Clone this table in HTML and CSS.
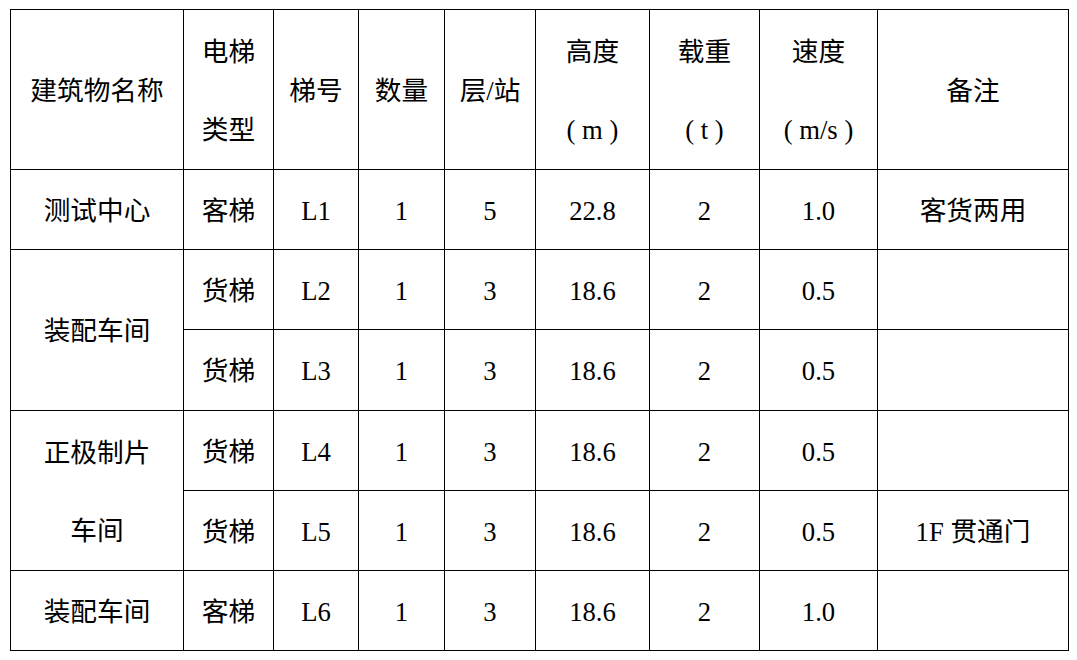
FILE: index.html
```html
<!DOCTYPE html>
<html lang="zh">
<head>
<meta charset="utf-8">
<link rel="stylesheet" href="styles.css">
</head>
<body>
<table class="spec">
  <colgroup>
    <col class="c1"><col class="c2"><col class="c3"><col class="c4"><col class="c5"><col class="c6"><col class="c7"><col class="c8"><col class="c9">
  </colgroup>
  <tr class="head">
    <td>建筑物名称</td>
    <td class="two">电梯<br>类型</td>
    <td>梯号</td>
    <td>数量</td>
    <td>层/站</td>
    <td class="two">高度<br>( m )</td>
    <td class="two">载重<br>( t )</td>
    <td class="two">速度<br>( m/s )</td>
    <td>备注</td>
  </tr>
  <tr>
    <td>测试中心</td><td>客梯</td><td>L1</td><td>1</td><td>5</td><td>22.8</td><td>2</td><td>1.0</td><td>客货两用</td>
  </tr>
  <tr>
    <td rowspan="2">装配车间</td><td>货梯</td><td>L2</td><td>1</td><td>3</td><td>18.6</td><td>2</td><td>0.5</td><td></td>
  </tr>
  <tr class="tall">
    <td>货梯</td><td>L3</td><td>1</td><td>3</td><td>18.6</td><td>2</td><td>0.5</td><td></td>
  </tr>
  <tr>
    <td rowspan="2" class="two">正极制片<br>车间</td><td>货梯</td><td>L4</td><td>1</td><td>3</td><td>18.6</td><td>2</td><td>0.5</td><td></td>
  </tr>
  <tr>
    <td>货梯</td><td>L5</td><td>1</td><td>3</td><td>18.6</td><td>2</td><td>0.5</td><td>1F 贯通门</td>
  </tr>
  <tr>
    <td>装配车间</td><td>客梯</td><td>L6</td><td>1</td><td>3</td><td>18.6</td><td>2</td><td>1.0</td><td></td>
  </tr>
</table>
</body>
</html>
```
FILE: styles.css
```css
html, body {
  margin: 0;
  padding: 0;
  background: #ffffff;
}
body {
  padding: 9px 0 0 10px;
}
.spec {
  border-collapse: collapse;
  table-layout: fixed;
  width: 1059px;
  font-family: "Liberation Serif", "Noto Sans CJK SC", serif;
  font-size: 26.67px;
  color: #000;
}
.c1 { width: 173px; }
.c2 { width: 90px; }
.c3 { width: 85px; }
.c4 { width: 86px; }
.c5 { width: 91px; }
.c6 { width: 114px; }
.c7 { width: 110px; }
.c8 { width: 118px; }
.c9 { width: 191px; }
.spec td {
  border: 1px solid #000;
  padding: 2px 0 0 0;
  text-align: center;
  vertical-align: middle;
  height: 77px;
  line-height: 30px;
  white-space: nowrap;
}
.spec tr.head td {
  height: 157px;
}
.spec tr.tall td {
  height: 78px;
}
.spec td.two {
  line-height: 78px;
}
```
